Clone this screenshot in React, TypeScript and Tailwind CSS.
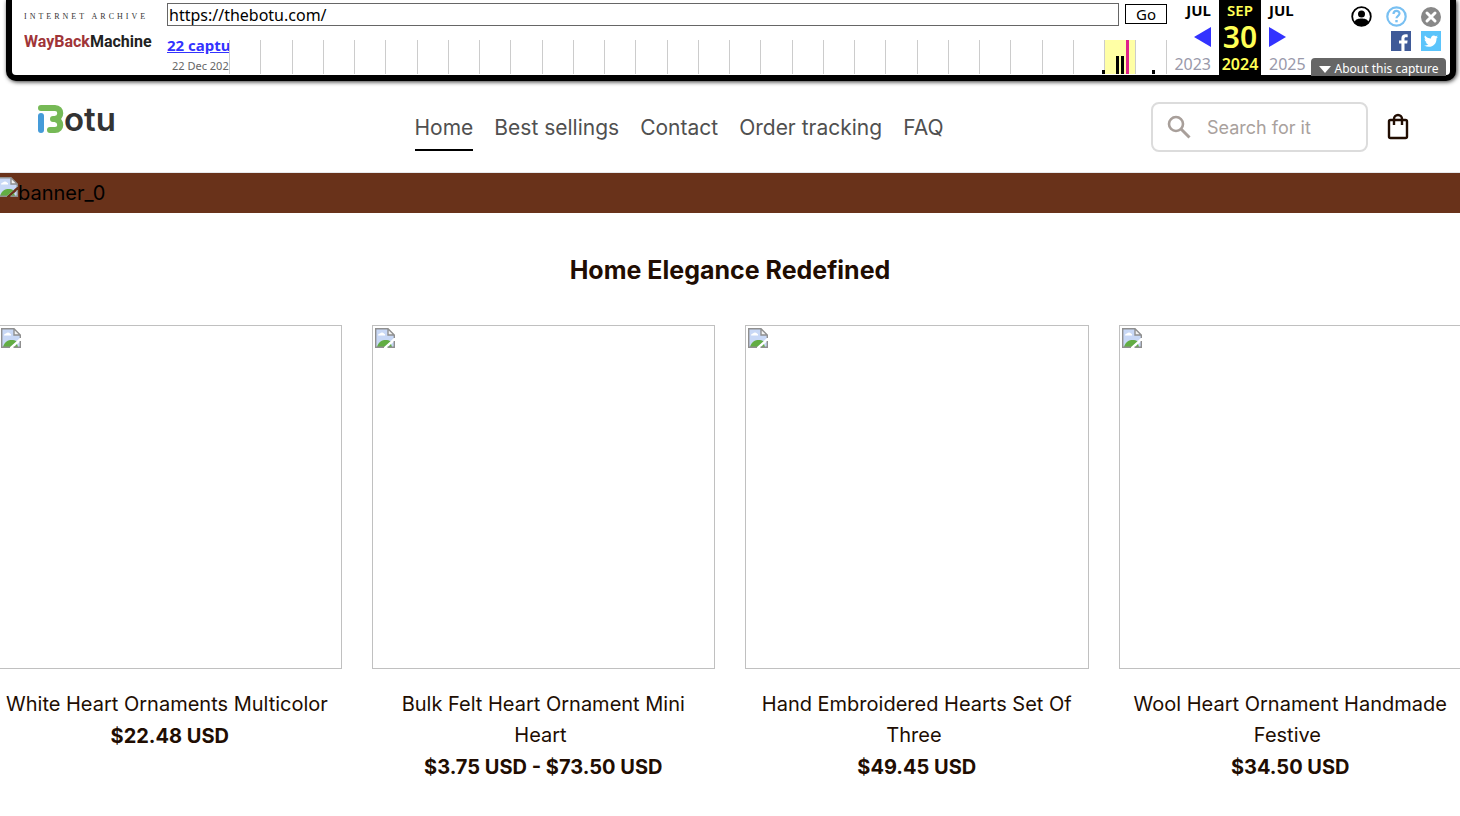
import { useState } from "react";

const navLinks = ["Home", "Best sellings", "Contact", "Order tracking", "FAQ"];

const products = [
  { title: "White Heart Ornaments Multicolor", price: "$22.48 USD" },
  { title: "Bulk Felt Heart Ornament Mini Heart", price: "$3.75 USD - $73.50 USD" },
  { title: "Hand Embroidered Hearts Set Of Three", price: "$49.45 USD" },
  { title: "Wool Heart Ornament Handmade Festive", price: "$34.50 USD" },
];

// x, height of each capture bar on the 938 wide timeline
const captureBars = [
  [873, 4],
  [887, 18],
  [892, 18],
  [923, 4],
];

function BrokenImage() {
  return (
    <svg width="20" height="20" viewBox="0 0 20 20" className="block shrink-0" aria-hidden="true">
      <path d="M1 1H13L19 7V10L9 19H1Z" fill="#c8d8f6" />
      <path d="M3 7.500a2 2 0 0 1 2-2 2.500 2.500 0 0 1 4 0 1.500 1.500 0 0 1 1 2Z" fill="#fff" />
      <path d="M2 19C4 11 12 11 15.500 13.200L9 19Z" fill="#62ad43" />
      <path d="M13 1V7H19Z" fill="#f4f4f4" />
      <path d="M19.500 13V19.500H12.500Z" fill="#c8d8f6" />
      <path d="M14 18L16 16L17 19H13Z" fill="#62ad43" />
      <path d="M9 19.300H.7V.7H13L19.300 7V10M13 1V7H19" fill="none" stroke="#8f8f8f" strokeWidth="1.400" />
      <path d="M12.500 19.300H19.300V13" fill="none" stroke="#8f8f8f" strokeWidth="1.400" />
    </svg>
  );
}

function Timeline() {
  return (
    <svg viewBox="0 0 938 34" preserveAspectRatio="none" className="h-[34px] w-full min-w-0 flex-1" aria-hidden="true">
      <rect x="875" width="31" height="34" fill="#ffffa5" />
      {Array.from({ length: 31 }, (_, i) => (
        <rect key={i} x={Math.min(Math.round(i * 31.25), 937)} width="1" height="34" fill="#ccc" />
      ))}
      <rect x="897" width="3" height="34" fill="#e0218a" />
      {captureBars.map(([x, h]) => (
        <rect key={x} x={x} y={34 - h} width="3" height={h} fill="#000" />
      ))}
    </svg>
  );
}

function ArchiveToolbar() {
  const [url, setUrl] = useState("https://thebotu.com/");

  return (
    <div className="ml-1.5 mr-1 flex h-[81px] rounded-b-[10px] border-x-6 border-b-6 border-black bg-white font-['Noto_Sans',sans-serif] shadow-[1px_1px_4px_#333]">
      {/* Logo */}
      <a href="#archive" className="flex w-[155px] shrink-0 flex-col pl-3 pt-3">
        <svg width="132" height="48" viewBox="0 0 132 48" role="img" aria-label="Internet Archive Wayback Machine">
          <text x="0" y="7" fontSize="8" letterSpacing="3" fill="#333" fontFamily="Liberation Serif, serif">INTERNET ARCHIVE</text>
          <text x="0" y="35" fontSize="16" fontWeight="700" fill="#a03538" fontFamily="Roboto, sans-serif">
            WayBack<tspan fill="#222">Machine</tspan>
          </text>
        </svg>
      </a>

      {/* Url and timeline */}
      <div className="min-w-0 flex-1">
        <form className="flex items-start gap-1.5 pt-[3px]" onSubmit={(e) => e.preventDefault()}>
          <input
            aria-label="Archived URL"
            value={url}
            onChange={(e) => setUrl(e.target.value)}
            className="h-[23px] min-w-0 flex-1 border border-[#666] px-px text-base text-black outline-none"
          />
          <button type="submit" className="mt-px h-5 w-[42px] border border-black text-[15px] leading-4 text-black">
            Go
          </button>
        </form>
        <div className="flex pt-2">
          <div className="w-[62px] shrink-0 overflow-hidden whitespace-nowrap">
            <a href="#captures" className="block text-[15px] font-bold leading-[22px] text-[#33f] underline">
              22 captures
            </a>
            <div className="pl-[5px] text-[11px] leading-5 text-[#666]">22 Dec 2022 - 7 Jul 2025</div>
          </div>
          <div className="flex min-w-0 flex-1 pt-1.5">
            <Timeline />
          </div>
        </div>
      </div>

      {/* Date picker */}
      <div className="ml-1.5 flex shrink-0 text-base leading-[22px]">
        <div className="flex w-[46px] flex-col items-end justify-between pr-2">
          <span className="text-[15px] font-bold leading-5 text-black">JUL</span>
          <a href="#previous" aria-label="Previous capture">
            <svg width="17" height="20" viewBox="0 0 17 20"><path d="M17 0V20L0 10Z" fill="#33f" /></svg>
          </a>
          <span className="text-[#99a]">2023</span>
        </div>
        <div className="flex w-[42px] flex-col items-center justify-between bg-black font-semibold text-[#ff5]">
          <span className="text-[15px] leading-5">SEP</span>
          <span className="text-[30px] leading-7">30</span>
          <span>2024</span>
        </div>
        <div className="flex w-[46px] flex-col items-start justify-between pl-2">
          <span className="text-[15px] font-bold leading-5 text-black">JUL</span>
          <a href="#next" aria-label="Next capture">
            <svg width="17" height="20" viewBox="0 0 17 20"><path d="M0 0V20L17 10Z" fill="#33f" /></svg>
          </a>
          <span className="text-[#99a]">2025</span>
        </div>
      </div>

      {/* Account, help, sharing */}
      <div className="ml-1 mr-1 flex w-[135px] shrink-0 flex-col items-end">
        <div className="flex items-center gap-3.5 pr-[5px] pt-1.5">
          <a href="#account" aria-label="Account">
            <svg width="21" height="21" viewBox="0 0 21 21">
              <circle cx="10.500" cy="10.500" r="9.300" fill="#fff" stroke="#000" strokeWidth="1.800" />
              <circle cx="10.500" cy="8" r="3.500" />
              <path d="M3.500 16c1-3 4-3.500 7-3.500s6 .5 7 3.500c-1.500 2.500-4 4-7 4s-5.500-1.500-7-4Z" />
            </svg>
          </a>
          <a href="#help" aria-label="Help">
            <svg width="21" height="21" viewBox="0 0 21 21" fill="none" stroke="#79c0f2">
              <circle cx="10.500" cy="10.500" r="9.200" strokeWidth="2.200" />
              <path d="M7.500 8c0-4 6-4 6-.5 0 2.300-3 2.300-3 4.800" strokeWidth="2.200" />
              <path d="M10.500 14v2.300" strokeWidth="2.400" />
            </svg>
          </a>
          <button type="button" aria-label="Close" className="block">
            <svg width="20" height="20" viewBox="0 0 20 20">
              <circle cx="10" cy="10" r="10" fill="#888" />
              <path d="M6 6l8 8M14 6l-8 8" stroke="#fff" strokeWidth="3" strokeLinecap="round" />
            </svg>
          </button>
        </div>
        <div className="flex gap-2.5 pr-[5px] pt-1">
          <a href="#facebook" aria-label="Facebook">
            <svg width="20" height="20" viewBox="0 0 20 20">
              <path d="M0 0H20V20H0Z" fill="#3f5a98" />
              <path d="M13.500 20v-7.500h2.700l.4-3h-3.100V7.800c0-1 .3-1.500 1.500-1.500h1.700V3.500c-4-.6-6.300.6-6.300 3.800v2.200H8v3h2.400V20Z" fill="#fff" />
            </svg>
          </a>
          <a href="#twitter" aria-label="Twitter">
            <svg width="20" height="20" viewBox="0 0 20 20">
              <path d="M0 0H20V20H0Z" fill="#5bc4fb" />
              <path d="M17 5.800l-1.600.4 1.200-1.600-1.800.7c-2-2-5.200-.5-4.800 2.300-2.500 0-4.500-1.200-6-3-.9 1.500-.4 3 .8 4l-1.200-.3c0 1.500 1 2.500 2.300 2.900h-1.200c.4 1.100 1.400 1.800 2.700 2-1.300 1-2.800 1.300-4.300 1.200 6 3.400 12.600 0 12.400-7Z" fill="#fff" />
            </svg>
          </a>
        </div>
        <button type="button" className="mt-[7px] flex h-[18px] w-full shrink-0 items-center justify-center gap-1 rounded-t bg-[#666] pt-1 text-xs text-white">
          <svg width="12" height="7" viewBox="0 0 12 7"><path d="M0 0H12L6 7Z" fill="#fff" /></svg>
          About this capture
        </button>
      </div>
    </div>
  );
}

function StoreHeader() {
  return (
    <header className="flex h-[92px] items-start justify-between border-b border-gray-200 pl-9 pr-[50px]">
      <a href="#home" className="block pt-[23px]">
        <svg width="84" height="32" viewBox="0 0 84 32" role="img" aria-label="Botu">
          <path d="M5 12V26" stroke="#459bd9" strokeWidth="6" strokeLinecap="round" />
          <path d="M5 4H19C26 4 26 14 19 15H17M19 15C26 16 26 26 19 26H14" fill="none" stroke="#76b956" strokeWidth="6" strokeLinecap="round" strokeLinejoin="round" />
          <text x="28" y="27" fontSize="33" fontWeight="600" fill="#333" fontFamily="Inter, sans-serif">otu</text>
        </svg>
      </a>

      <nav className="flex gap-[21px] pl-[87px] pt-[30px]">
        {navLinks.map((link, i) => (
          <a
            key={link}
            href="#nav"
            className={i === 0 ? "border-b-2 border-black pb-1 text-[21px] leading-[34px] text-[#505050]" : "pb-1 text-[21px] leading-[34px] text-[#505050]"}
          >
            {link}
          </a>
        ))}
      </nav>

      <div className="flex items-center gap-[18px] pt-[21px]">
        <label className="flex h-[50px] w-[217px] items-center gap-4 rounded-lg border-2 border-[#dcdcdc] px-3.5">
          <svg width="24" height="24" viewBox="0 0 24 24" fill="none" stroke="#a89f9a" strokeWidth="2.600" className="shrink-0">
            <circle cx="9" cy="9" r="7" />
            <path d="M14 14l8.500 8.500" strokeWidth="3" />
          </svg>
          <input aria-label="Search" placeholder="Search for it" className="w-full min-w-0 pt-0.5 text-lg text-[#210d02] outline-none placeholder:text-[#a9a19d]" />
        </label>
        <a href="#cart" aria-label="Cart">
          <svg width="24" height="28" viewBox="0 0 24 28" fill="none" stroke="#210d02" strokeWidth="2.400" strokeLinejoin="round">
            <rect x="3" y="7" width="18" height="18" rx="1.500" />
            <path d="M8 12V6a4 4 0 0 1 8 0V12" />
          </svg>
        </a>
      </div>
    </header>
  );
}

export default function App() {
  return (
    <div className="overflow-x-hidden bg-white font-[Inter,sans-serif] text-[#210d02]">
      <ArchiveToolbar />
      <StoreHeader />

      {/* Banner */}
      <div className="flex h-10 items-center bg-[#69321a] text-xl text-black">
        <div className="-ml-0.5 pb-3">
          <BrokenImage />
        </div>
        banner_0
      </div>

      {/* Products */}
      <main>
        <h2 className="pt-[39px] text-center text-[25px] font-bold leading-9">Home Elegance Redefined</h2>
        <div className="-mx-0.5 mt-[37px] grid grid-cols-4 gap-[30px]">
          {products.map((product) => (
            <a key={product.title} href="#product" className="block text-center">
              <div className="aspect-square border border-[#c0c0c0] p-0.5">
                <BrokenImage />
              </div>
              <h3 className="mt-5 text-xl leading-[31px]">{product.title}&nbsp;</h3>
              <p className="text-xl font-bold leading-8">{product.price}</p>
            </a>
          ))}
        </div>
      </main>
    </div>
  );
}
